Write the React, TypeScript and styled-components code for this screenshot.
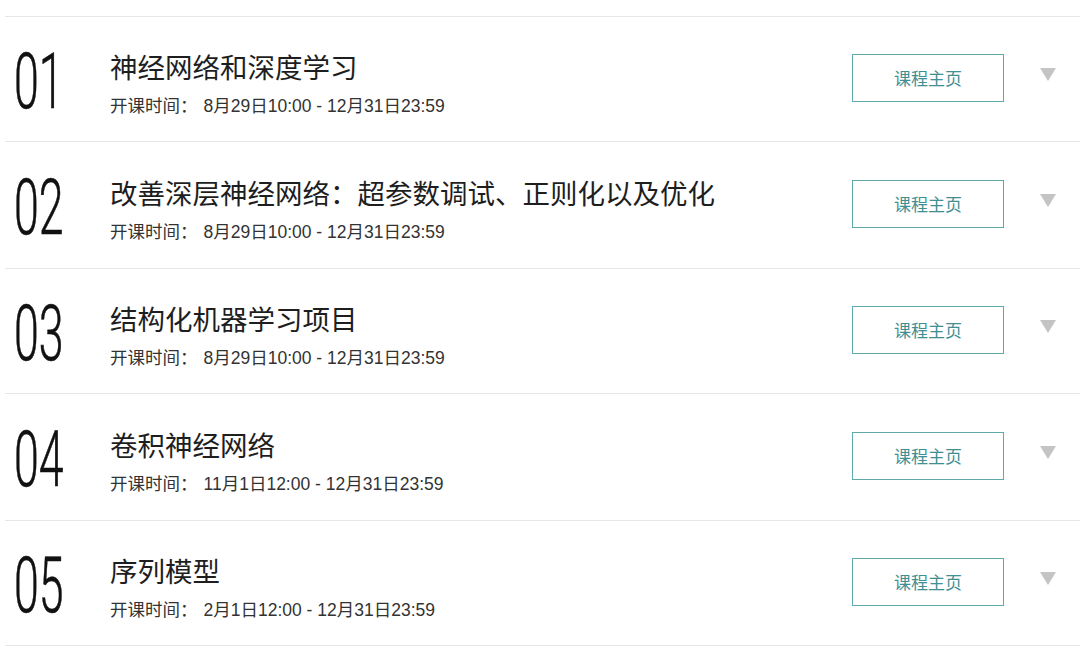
import { type FC } from 'react'
import styled, { createGlobalStyle } from 'styled-components'

interface ICourse {
  title: string
  time: string
}

const courses: ICourse[] = [
  { title: '神经网络和深度学习', time: '8月29日10:00 - 12月31日23:59' },
  { title: '改善深层神经网络：超参数调试、正则化以及优化', time: '8月29日10:00 - 12月31日23:59' },
  { title: '结构化机器学习项目', time: '8月29日10:00 - 12月31日23:59' },
  { title: '卷积神经网络', time: '11月1日12:00 - 12月31日23:59' },
  { title: '序列模型', time: '2月1日12:00 - 12月31日23:59' },
]

const GlobalStyle = createGlobalStyle`
  html, body {
    margin: 0;
    padding: 0;
    background: #fff;
  }
  body {
    font-family: 'Noto Sans CJK SC', sans-serif;
    color: #222;
  }
`

const Page = styled.div`
  padding-top: 16px;
`

const List = styled.ul`
  list-style: none;
  margin: 0 0 0 5px;
  padding: 0;
  border-top: 1px solid #e6e6e6;
`

const Row = styled.li`
  display: flex;
  align-items: center;
  height: 124px;
  padding: 0 24px 0 10px;
  border-bottom: 1px solid #e6e6e6;

  &:nth-child(2),
  &:nth-child(4) {
    height: 126px;
  }
`

const Index = styled.div`
  width: 95px;
  flex-shrink: 0;
  height: 80px;
  overflow: visible;
`

const Digits = styled.span`
  display: inline-block;
  font-family: Roboto, 'Noto Sans', sans-serif;
  font-weight: 300;
  font-size: 77px;
  line-height: 80px;
  color: #111;
  -webkit-text-stroke: 0.6px #111;
  transform: scaleX(0.58);
  transform-origin: left center;
  margin-left: -1px;
  margin-top: 3px;
`

const Info = styled.div`
  flex: 1;
  min-width: 0;
  margin-top: 8px;
`

const Title = styled.h3`
  margin: 0;
  font-family: 'Noto Sans CJK SC', sans-serif;
  font-size: 27.5px;
  font-weight: 400;
  line-height: 36px;
  color: #1e1e1e;
`

const Time = styled.p`
  margin: 10px 0 0;
  font-family: 'Liberation Sans', 'Noto Sans CJK SC', sans-serif;
  font-size: 17.5px;
  line-height: 24px;
  color: #333;
`

const Label = styled.span`
  margin-right: 6px;
`

const HomeButton = styled.button`
  width: 152px;
  height: 48px;
  flex-shrink: 0;
  margin-top: -3px;
  border: 1px solid #5fa8a9;
  background: #fff;
  color: #3f8f93;
  font-family: 'Noto Sans CJK SC', sans-serif;
  font-size: 17px;
  cursor: pointer;
`

const Toggle = styled.span`
  width: 0;
  height: 0;
  margin: -10px 0 0 36px;
  border-left: 8px solid transparent;
  border-right: 8px solid transparent;
  border-top: 13px solid #c4c4c4;
`

const pad = (n: number): string => String(n).padStart(2, '0')

const App: FC = () => (
  <Page>
    <GlobalStyle />
    <List>
      {courses.map((course, i) => (
        <Row key={course.title}>
          <Index>
            <Digits>{pad(i + 1)}</Digits>
          </Index>
          <Info>
            <Title>{course.title}</Title>
            <Time>
              <Label>开课时间：</Label>
              {course.time}
            </Time>
          </Info>
          <HomeButton>课程主页</HomeButton>
          <Toggle />
        </Row>
      ))}
    </List>
  </Page>
)

export default App
